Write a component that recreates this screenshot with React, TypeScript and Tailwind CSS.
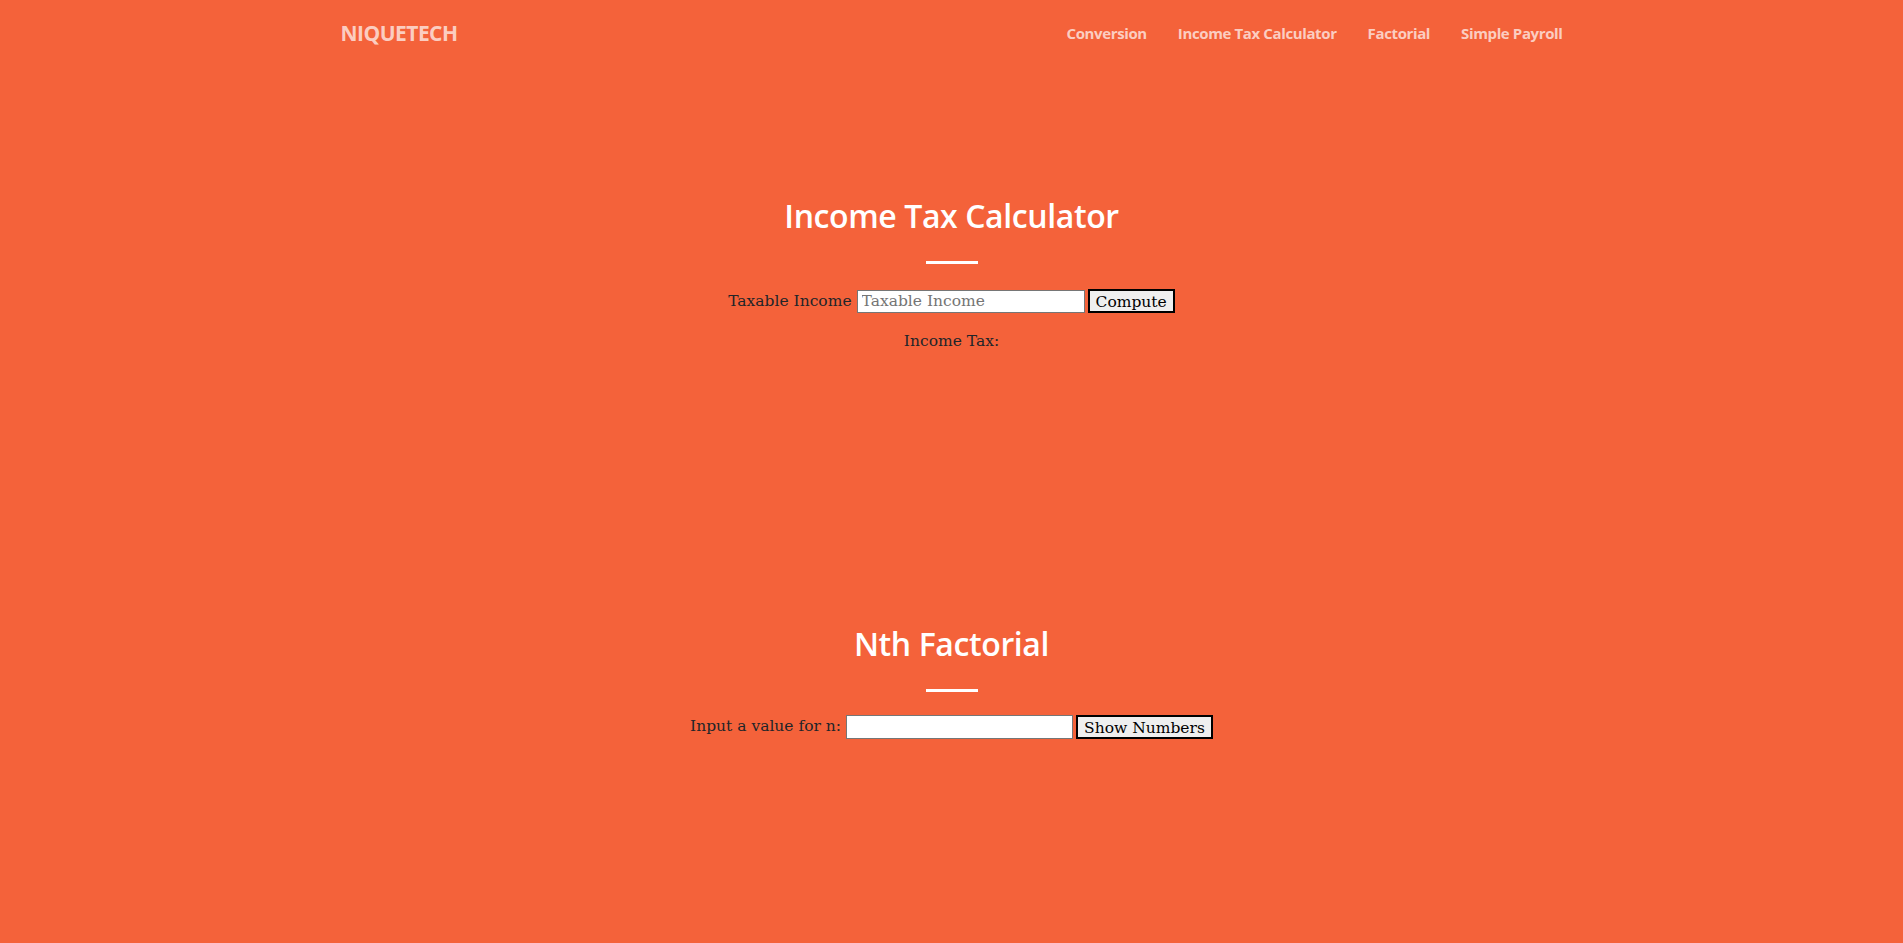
import React from "react";

const heading = { fontFamily: '"Open Sans", "Noto Sans", sans-serif' };
const body = { fontFamily: '"DejaVu Serif", "Liberation Serif", serif' };

const links = ["Conversion", "Income Tax Calculator", "Factorial", "Simple Payroll"];

const Divider = () => <hr className="mx-auto mt-[26px] h-[3px] w-[52px] border-0 bg-white" />;

export default function App() {
  return (
    <div className="min-h-[943px] w-full bg-[#f4623a]" style={body}>
      <nav className="h-[67px] w-full">
        <div className="mx-auto flex h-full w-[1222px] items-center justify-between" style={heading}>
          <a className="text-[21px] font-bold tracking-tight text-white/70">NIQUETECH</a>
          <ul className="flex items-center gap-[31px]">
            {links.map((l) => (
              <li key={l} className="text-[15px] font-bold tracking-tight text-white/70">
                {l}
              </li>
            ))}
          </ul>
        </div>
      </nav>

      <section className="pt-[130px] text-center">
        <h2 className="text-[32px] font-semibold leading-[1.2] tracking-[-0.4px] text-white" style={heading}>
          Income Tax Calculator
        </h2>
        <Divider />
        <div className="mt-[25px] flex items-center justify-center text-[15.5px] text-[#212529]">
          <label className="mr-[5px]">Taxable Income</label>
          <input
            placeholder="Taxable Income"
            className="h-[23px] w-[228px] border border-[#767676] bg-white px-[4px] text-[15.5px] text-black placeholder:text-[#757575]"
            style={body}
          />
          <button className="ml-[3px] h-[24px] border-2 border-black bg-[#efefef] px-[6px] text-[15.5px] text-black">
            Compute
          </button>
        </div>
        <p className="mt-[17px] text-[15.5px] text-[#212529]">Income Tax:</p>
      </section>

      <section className="pt-[271px] text-center">
        <h2 className="text-[32px] font-semibold leading-[1.2] tracking-[-0.4px] text-white" style={heading}>
          Nth Factorial
        </h2>
        <Divider />
        <div className="mt-[23px] flex items-center justify-center text-[15.5px] text-[#212529]">
          <label className="mr-[5px]">Input a value for n:</label>
          <input
            className="h-[24px] w-[227px] border border-[#767676] bg-white px-[4px] text-[15.5px] text-black"
            style={body}
          />
          <button className="ml-[3px] h-[24px] border-2 border-black bg-[#efefef] px-[6px] text-[15.5px] text-black">
            Show Numbers
          </button>
        </div>
      </section>
    </div>
  );
}
